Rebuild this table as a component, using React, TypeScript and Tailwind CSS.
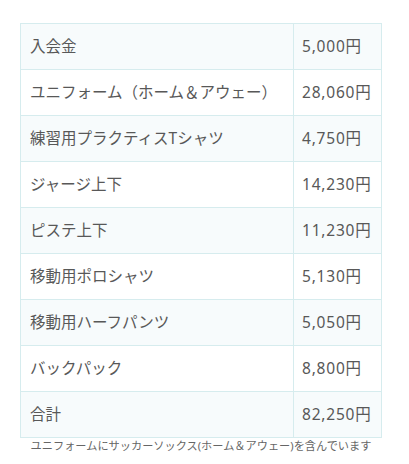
const rows: [string, string][] = [
  ['入会金', '5,000円'],
  ['ユニフォーム（ホーム＆アウェー）', '28,060円'],
  ['練習用プラクティスTシャツ', '4,750円'],
  ['ジャージ上下', '14,230円'],
  ['ピステ上下', '11,230円'],
  ['移動用ポロシャツ', '5,130円'],
  ['移動用ハーフパンツ', '5,050円'],
  ['バックパック', '8,800円'],
  ['合計', '82,250円'],
];

export default function App() {
  return (
    <div
      className="w-[409px] h-[464px] bg-white pt-[23px] pl-[20px] text-[#585858]"
      style={{ fontFamily: '"Noto Sans", "Noto Sans CJK JP", sans-serif' }}
    >
      <div className="w-[362px]">
        <table className="w-full border-collapse text-[15.5px]">
          <tbody>
            {rows.map(([name, price], i) => (
              <tr key={name} className={i % 2 === 0 ? 'bg-[#f7fbfc]' : 'bg-white'}>
                <td className="h-[46px] w-[273px] border border-[#d6ecee] pl-[9px] py-0 leading-none">
                  {name}
                </td>
                <td className="h-[46px] border border-[#d6ecee] pl-[8px] py-0 leading-none tracking-[0.8px]">
                  {price}
                </td>
              </tr>
            ))}
          </tbody>
        </table>
        <p className="mt-[1px] text-center text-[11.2px] leading-[14px] text-[#666]">
          ユニフォームにサッカーソックス(ホーム＆アウェー)を含んでいます
        </p>
      </div>
    </div>
  );
}
